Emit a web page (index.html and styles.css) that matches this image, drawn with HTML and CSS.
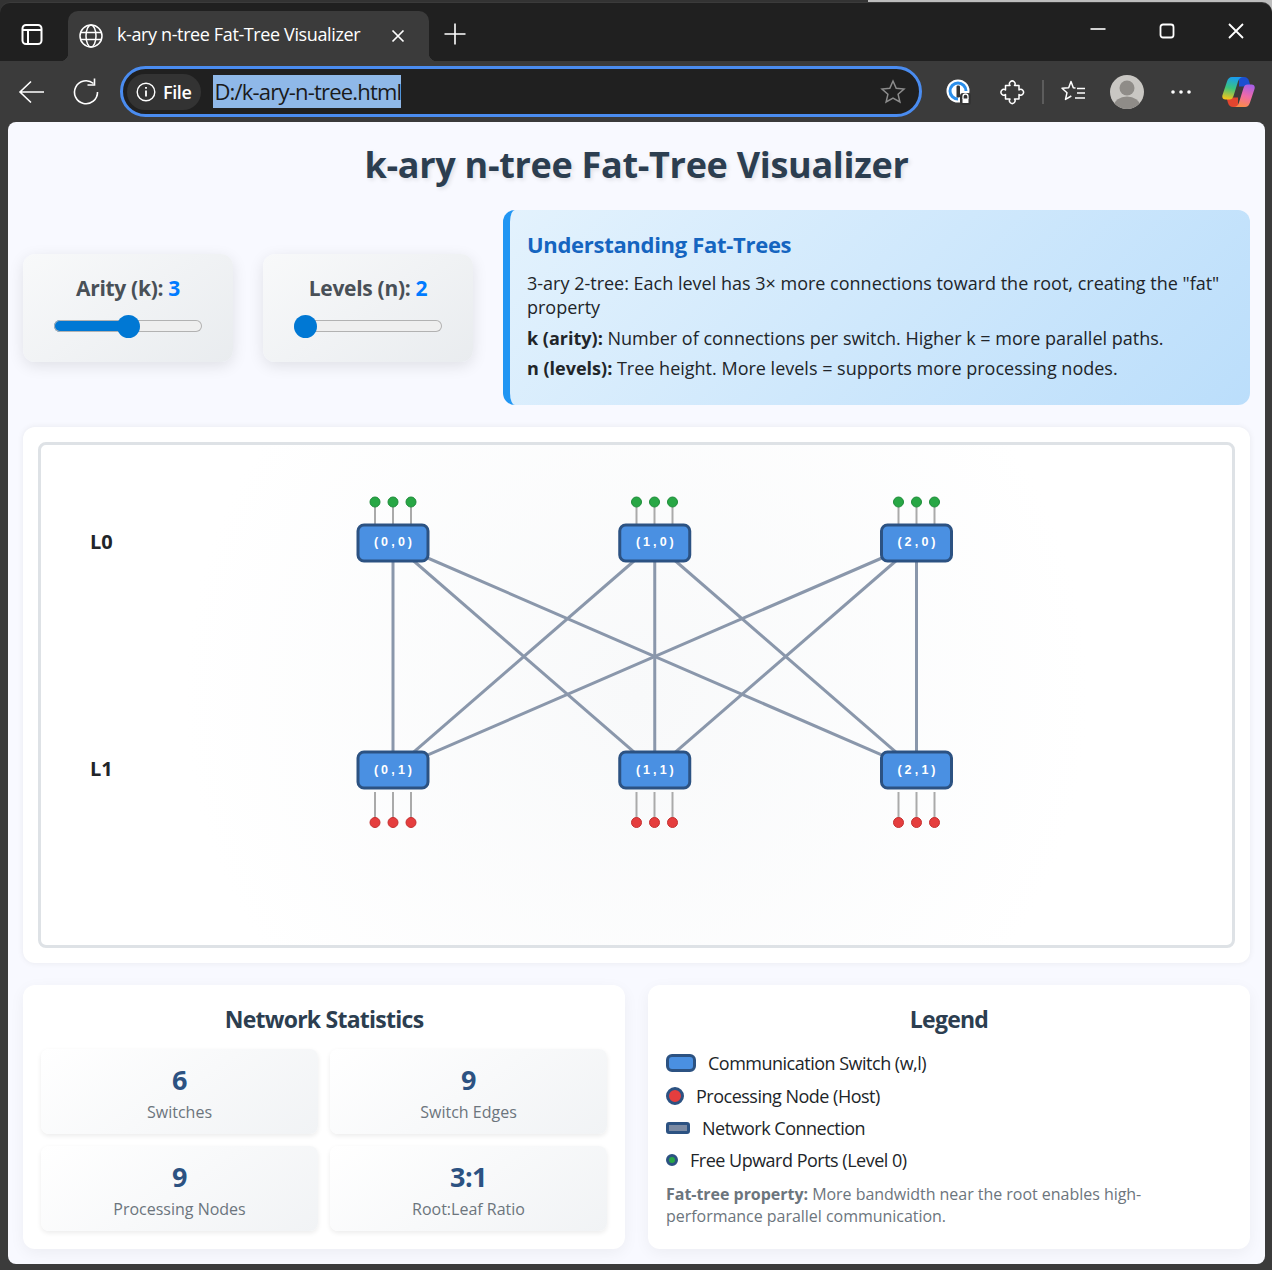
FILE: index.html
```html
<!DOCTYPE html>
<html lang="en">
	<head>
		<meta charset="UTF-8" />
		<meta name="viewport" content="width=device-width, initial-scale=1.0" />
		<title>k-ary n-tree Fat-Tree Visualizer</title>
		<link rel="stylesheet" href="styles.css">
	</head>
	<body>
		<div class="window">
			<div class="tabstrip">
				<svg class="tab-actions" width="24" height="24" viewBox="0 0 24 24" fill="none" stroke="#fff" stroke-width="2"><rect x="2.500" y="3" width="19" height="19" rx="3.500"/><path d="M2.500 8h19M8 8v14"/></svg>
				<div class="tab">
					<svg width="26" height="26" viewBox="0 0 26 26" fill="none" stroke="#fff" stroke-width="1.500"><circle cx="13" cy="13" r="11"/><ellipse cx="13" cy="13" rx="5" ry="11"/><path d="M2.600 9.500h20.800M2.600 16.500h20.800"/></svg>
					<span class="tab-title">k-ary n-tree Fat-Tree Visualizer</span>
					<svg class="tab-close" width="14" height="14" viewBox="0 0 14 14" stroke="#fff" stroke-width="1.700"><path d="M1.500 1.500l11 11M12.500 1.500l-11 11"/></svg>
				</div>
				<svg class="new-tab" width="24" height="24" viewBox="0 0 24 24" stroke="#fff" stroke-width="1.600"><path d="M12 1.500v21M1.500 12h21"/></svg>
				<div class="caption">
					<svg width="16" height="16" viewBox="0 0 16 16" stroke="#fff" stroke-width="1.600"><path d="M0.500 6h15"/></svg>
					<svg width="16" height="16" viewBox="0 0 16 16" fill="none" stroke="#fff" stroke-width="1.800"><rect x="1.500" y="1.500" width="13" height="13" rx="2.500"/></svg>
					<svg width="16" height="16" viewBox="0 0 16 16" stroke="#fff" stroke-width="1.800"><path d="M1 1l14 14M15 1L1 15"/></svg>
				</div>
			</div>
			<div class="toolbar">
				<svg class="nav-back" width="28" height="28" viewBox="0 0 28 28" fill="none" stroke="#fff" stroke-width="1.600"><path d="M2 14h24M13 3.500L2 14l11 10.500"/></svg>
				<svg class="nav-reload" width="28" height="28" viewBox="0 0 28 28" fill="none" stroke="#fff" stroke-width="1.600"><path d="M21.500 5.500A11.500 11.500 0 1 0 25.500 14"/><path d="M22.500 0.500v6.500h-7"/></svg>
				<div class="address">
					<div class="site-info">
						<svg width="20" height="20" viewBox="0 0 20 20" fill="none" stroke="#fff" stroke-width="1.400"><circle cx="10" cy="10" r="8.800"/><path d="M10 8.500v6" stroke-width="1.800"/><path d="M10 5v1.800" stroke-width="1.800"/></svg>
						<span>File</span>
					</div>
					<span class="url">D:/k-ary-n-tree.html</span>
					<svg class="fav-star" width="26" height="26" viewBox="0 0 26 26" fill="none" stroke="#8c8c8c" stroke-width="1.500"><path d="M13 2l3.200 7.300 7.800.8-5.900 5.200 1.800 7.700L13 19l-6.900 4 1.800-7.700L2 10.100l7.800-.8z"/></svg>
				</div>
				<div class="toolbar-icons">
					<svg class="ext-pass" width="26" height="26" viewBox="0 0 26 26"><circle cx="12" cy="12" r="11.500" fill="#fff"/><path d="M12 2.500a9.500 9.500 0 0 1 9.500 9.500h-3a6.500 6.500 0 0 0-13 0 6.500 6.500 0 0 0 6.500 6.500v3A9.500 9.500 0 0 1 12 2.500z" fill="#2b8eea"/><rect x="10.500" y="6.500" width="3.500" height="12" rx="1.200" fill="#333"/><rect x="14" y="14" width="11" height="12" rx="3" fill="#333"/><path d="M17 20v-2.500a2.500 2.500 0 0 1 5 0V20" fill="none" stroke="#fff" stroke-width="1.300"/><rect x="16.500" y="19.500" width="6" height="4.500" fill="#fff"/></svg>
					<svg class="ext-puzzle" width="26" height="26" viewBox="0 0 26 26" fill="none" stroke="#fff" stroke-width="1.500" stroke-linejoin="round"><path d="M6.500 6.500H11a2.800 2.800 0 1 1 4.500 0H20V11a2.800 2.800 0 1 1 0 4.500V20h-4.500a2.800 2.800 0 1 1-4.500 0H6.500v-4.500a2.800 2.800 0 1 1 0-4.500z"/></svg>
					<span class="toolbar-sep"></span>
					<svg class="fav-list" width="26" height="26" viewBox="0 0 26 26" fill="none" stroke="#fff" stroke-width="1.500" stroke-linejoin="round"><path d="M15.500 9l-2.200-.3L11 2.500 8.700 8.700 2 9.300l5 4.400-1.500 6.700 5.800-3.400M17 9.500h8M17 14h8M15 19h10"/></svg>
					<svg class="avatar" width="34" height="34" viewBox="0 0 34 34"><defs><clipPath id="avatarClip"><circle cx="17" cy="17" r="17"/></clipPath></defs><circle cx="17" cy="17" r="17" fill="#c9c7c3"/><g clip-path="url(#avatarClip)" fill="#8f8c88"><circle cx="17" cy="13" r="7.500"/><ellipse cx="17" cy="31" rx="13" ry="9.500"/></g></svg>
					<svg class="more" width="22" height="6" viewBox="0 0 22 6" fill="#fff"><circle cx="3" cy="3" r="1.800"/><circle cx="11" cy="3" r="1.800"/><circle cx="19" cy="3" r="1.800"/></svg>
					<svg class="copilot" width="33" height="30" viewBox="0 0 33 30">
						<defs>
							<linearGradient id="copA" x1="0.500" y1="0" x2="0.300" y2="1"><stop offset="0" stop-color="#1a9cf0"/><stop offset=".5" stop-color="#3cc47c"/><stop offset="1" stop-color="#f6c51a"/></linearGradient>
							<linearGradient id="copB" x1="0.700" y1="0" x2="0.400" y2="1"><stop offset="0" stop-color="#a85fe6"/><stop offset=".5" stop-color="#f06aa8"/><stop offset="1" stop-color="#fb8c48"/></linearGradient>
						</defs>
						<path d="M17 0h5c2.500 0 4.200 1.400 5 4l1.600 5.500H17z" fill="#1c4fd0"/>
						<path d="M16 30h-5c-2.500 0-4.200-1.400-5-4L4.400 20.500H16z" fill="#e2452f"/>
						<path d="M10 0h11.500c-3 0-4.500 1.500-5.500 4.500L11.500 19c-.8 2.500-2 3.500-4 3.500H3.500c-2.500 0-3.800-1.800-3-4.500L5 4.500C6 1.500 7.500 0 10 0z" fill="url(#copA)"/>
						<path d="M23 30H11.500c3 0 4.500-1.500 5.500-4.500L21.500 11c.8-2.500 2-3.500 4-3.500h4c2.500 0 3.800 1.800 3 4.500L28 25.500C27 28.500 25.500 30 23 30z" fill="url(#copB)"/>
					</svg>
				</div>
			</div>
			<div class="page">
				<h1>k-ary n-tree Fat-Tree Visualizer</h1>
				<div class="top-row">
					<div class="control">
						<label for="arity">Arity (k): <span class="value">3</span></label>
						<input type="range" id="arity" min="2" max="4" value="3" style="--fill: 50%" />
					</div>
					<div class="control">
						<label for="levels">Levels (n): <span class="value">2</span></label>
						<input type="range" id="levels" min="2" max="4" value="2" style="--fill: 0%" />
					</div>
					<div class="info">
						<h3>Understanding Fat-Trees</h3>
						<p>3-ary 2-tree: Each level has 3× more connections toward the root, creating the "fat" property</p>
						<p><strong>k (arity):</strong> Number of connections per switch. Higher k = more parallel paths.</p>
						<p><strong>n (levels):</strong> Tree height. More levels = supports more processing nodes.</p>
					</div>
				</div>

				<div class="viz">
					<div class="viz-inner">
						<svg class="tree" viewBox="41 445 1191 500">
							<g class="edges">
								<line x1="393" y1="543" x2="393" y2="770"/>
								<line x1="393" y1="543" x2="654.750" y2="770"/>
								<line x1="393" y1="543" x2="916.500" y2="770"/>
								<line x1="654.750" y1="543" x2="393" y2="770"/>
								<line x1="654.750" y1="543" x2="654.750" y2="770"/>
								<line x1="654.750" y1="543" x2="916.500" y2="770"/>
								<line x1="916.500" y1="543" x2="393" y2="770"/>
								<line x1="916.500" y1="543" x2="654.750" y2="770"/>
								<line x1="916.500" y1="543" x2="916.500" y2="770"/>
							</g>
							<g class="ports">
								<line x1="375" y1="507" x2="375" y2="525"/><line x1="393" y1="507" x2="393" y2="525"/><line x1="411" y1="507" x2="411" y2="525"/>
								<line x1="636.500" y1="507" x2="636.500" y2="525"/><line x1="654.500" y1="507" x2="654.500" y2="525"/><line x1="672.500" y1="507" x2="672.500" y2="525"/>
								<line x1="898.500" y1="507" x2="898.500" y2="525"/><line x1="916.500" y1="507" x2="916.500" y2="525"/><line x1="934.500" y1="507" x2="934.500" y2="525"/>
								<line x1="375" y1="792" x2="375" y2="818"/><line x1="393" y1="792" x2="393" y2="818"/><line x1="411" y1="792" x2="411" y2="818"/>
								<line x1="636.500" y1="792" x2="636.500" y2="818"/><line x1="654.500" y1="792" x2="654.500" y2="818"/><line x1="672.500" y1="792" x2="672.500" y2="818"/>
								<line x1="898.500" y1="792" x2="898.500" y2="818"/><line x1="916.500" y1="792" x2="916.500" y2="818"/><line x1="934.500" y1="792" x2="934.500" y2="818"/>
							</g>
							<g class="free-ports">
								<circle cx="375" cy="502" r="5"/><circle cx="393" cy="502" r="5"/><circle cx="411" cy="502" r="5"/>
								<circle cx="636.500" cy="502" r="5"/><circle cx="654.500" cy="502" r="5"/><circle cx="672.500" cy="502" r="5"/>
								<circle cx="898.500" cy="502" r="5"/><circle cx="916.500" cy="502" r="5"/><circle cx="934.500" cy="502" r="5"/>
							</g>
							<g class="hosts">
								<circle cx="375" cy="822.500" r="5"/><circle cx="393" cy="822.500" r="5"/><circle cx="411" cy="822.500" r="5"/>
								<circle cx="636.500" cy="822.500" r="5"/><circle cx="654.500" cy="822.500" r="5"/><circle cx="672.500" cy="822.500" r="5"/>
								<circle cx="898.500" cy="822.500" r="5"/><circle cx="916.500" cy="822.500" r="5"/><circle cx="934.500" cy="822.500" r="5"/>
							</g>
							<g class="switches">
								<rect x="358" y="525" width="70" height="36" rx="6"/>
								<rect x="619.750" y="525" width="70" height="36" rx="6"/>
								<rect x="881.500" y="525" width="70" height="36" rx="6"/>
								<rect x="358" y="752" width="70" height="36" rx="6"/>
								<rect x="619.750" y="752" width="70" height="36" rx="6"/>
								<rect x="881.500" y="752" width="70" height="36" rx="6"/>
							</g>
							<!-- one x per glyph keeps the fixed pitch of the labels -->
							<g class="switch-labels">
								<text x="376.200 384.600 393 401.400 409.800" y="546">(0,0)</text>
								<text x="638 646.400 654.800 663.200 671.600" y="546">(1,0)</text>
								<text x="899.700 908.100 916.500 924.900 933.300" y="546">(2,0)</text>
								<text x="376.200 384.600 393 401.400 409.800" y="774">(0,1)</text>
								<text x="638 646.400 654.800 663.200 671.600" y="774">(1,1)</text>
								<text x="899.700 908.100 916.500 924.900 933.300" y="774">(2,1)</text>
							</g>
							<g class="level-labels">
								<text x="90" y="549">L0</text>
								<text x="90" y="776">L1</text>
							</g>
						</svg>
					</div>
				</div>

				<div class="bottom-row">
					<div class="panel">
						<h3 class="stats-title">Network Statistics</h3>
						<div class="stats">
							<div class="stat"><div class="stat-value">6</div><div class="stat-label">Switches</div></div>
							<div class="stat"><div class="stat-value">9</div><div class="stat-label">Switch Edges</div></div>
							<div class="stat"><div class="stat-value">9</div><div class="stat-label">Processing Nodes</div></div>
							<div class="stat"><div class="stat-value">3:1</div><div class="stat-label">Root:Leaf Ratio</div></div>
						</div>
					</div>
					<div class="panel">
						<h3 class="legend-title">Legend</h3>
						<div class="legend-item legend-first"><span class="swatch swatch-switch"></span>Communication Switch (w,l)</div>
						<div class="legend-item"><span class="swatch swatch-host"></span>Processing Node (Host)</div>
						<div class="legend-item"><span class="swatch swatch-edge"></span>Network Connection</div>
						<div class="legend-item"><span class="swatch swatch-port"></span>Free Upward Ports (Level 0)</div>
						<p class="legend-note"><strong>Fat-tree property:</strong> More bandwidth near the root enables high-performance parallel communication.</p>
					</div>
				</div>
			</div>
		</div>
	</body>
</html>
```

FILE: styles.css
```css
* {
	box-sizing: border-box;
}
html,
body {
	margin: 0;
	height: 100%;
}
body {
	font-family: "Open Sans", "Noto Sans", sans-serif;
	overflow: hidden;
	background: linear-gradient(to right, #333 868px, #bdbdbd 868px);
}
.window {
	height: 1268px;
	margin-top: 2px;
	padding-top: 1px;
	background: #3b3b3b;
	border-radius: 10px 10px 0 0;
	display: flex;
	flex-direction: column;
}

/* browser chrome */
.tabstrip {
	height: 58px;
	background: #202020;
	border-radius: 10px 10px 0 0;
	display: flex;
	align-items: center;
	padding: 8px 0 0 20px;
}
.tab-actions {
	margin: -4px 0 0 0;
}
.tab {
	position: relative;
	width: 361px;
	height: 50px;
	margin-left: 24px;
	padding: 0 24px 0 10px;
	background: #3b3b3b;
	border-radius: 10px 10px 0 0;
	display: flex;
	align-items: center;
	color: #fff;
	font-size: 18px;
}
.tab::before,
.tab::after {
	content: "";
	position: absolute;
	bottom: 0;
	width: 8px;
	height: 8px;
}
.tab::before {
	left: -8px;
	background: radial-gradient(circle at 0 0, transparent 8px, #3b3b3b 8.500px);
}
.tab::after {
	right: -8px;
	background: radial-gradient(circle at 100% 0, transparent 8px, #3b3b3b 8.500px);
}
.tab-title {
	flex: 1;
	margin: -5px 0 0 13px;
	letter-spacing: -0.38px;
	white-space: nowrap;
}
.new-tab {
	margin: -4px 0 0 14px;
}
.caption {
	margin-left: auto;
	margin-top: -10px;
	padding-right: 28px;
	display: flex;
	gap: 53px;
}
.toolbar {
	height: 61px;
	display: flex;
	align-items: center;
	padding: 0 0 0 18px;
}
.nav-reload {
	margin-left: 26px;
}
.address {
	width: 802px;
	height: 51px;
	margin-left: 20px;
	border: 3px solid #4a8cf0;
	border-radius: 26px;
	background: #202020;
	display: flex;
	align-items: center;
	padding-left: 4px;
	color: #fff;
}
.site-info {
	height: 36px;
	padding: 0 10px 0 9px;
	border-radius: 18px;
	background: #333;
	display: flex;
	align-items: center;
	gap: 7px;
	font-size: 18px;
	font-weight: 600;
	letter-spacing: -0.4px;
}
.url {
	margin-left: 12px;
	padding: 0 0 0 1px;
	background: #8fb8e8;
	color: #1a1a1a;
	font-size: 22px;
	line-height: 33px;
	letter-spacing: -0.8px;
}
.fav-star {
	margin-left: auto;
	margin-right: 13px;
}
.toolbar-icons {
	display: flex;
	align-items: center;
	margin-left: 24px;
}
.ext-puzzle {
	margin-left: 27px;
}
.toolbar-sep {
	width: 2px;
	height: 24px;
	margin-left: 17px;
	background: #5c5c5c;
}
.fav-list {
	margin-left: 16px;
}
.avatar {
	margin-left: 24px;
}
.more {
	margin-left: 26px;
}
.copilot {
	margin-left: 30px;
}

/* page */
.page {
	height: 1142px;
	margin: 0 7px 0 8px;
	padding: 15px;
	background: #f8f9ff;
	border-radius: 8px;
}
h1 {
	margin: 0 0 15px;
	height: 58px;
	text-align: center;
	color: #2c3e50;
	font-size: 36px;
	line-height: 56px;
	letter-spacing: -0.3px;
	text-shadow: 2px 2px 4px rgba(0, 0, 0, 0.1);
}
.top-row {
	display: flex;
	align-items: center;
	gap: 30px;
}
.control {
	width: 210px;
	height: 108px;
	padding: 18px 31px 0;
	border-radius: 12px;
	background: linear-gradient(145deg, #f8f9fa, #e9ecef);
	box-shadow: 0 4px 15px rgba(0, 0, 0, 0.1);
	text-align: center;
}
.control label {
	display: block;
	margin-bottom: 11px;
	color: #495057;
	font-size: 21px;
	font-weight: 700;
	letter-spacing: -0.3px;
	line-height: 32px;
}
.value {
	color: #007bff;
}
input[type="range"] {
	-webkit-appearance: none;
	appearance: none;
	display: block;
	width: 148px;
	height: 23px;
	margin: 0;
	background: transparent;
}
input[type="range"]::-webkit-slider-runnable-track {
	height: 12px;
	border-radius: 6px;
	box-shadow: inset 0 0 0 1px #b2b2b2;
	background: linear-gradient(to right, #0078d4 var(--fill), #efefef var(--fill));
}
input[type="range"]::-webkit-slider-thumb {
	-webkit-appearance: none;
	width: 23px;
	height: 23px;
	margin-top: -5.500px;
	border-radius: 50%;
	background: #0078d4;
}
.info {
	flex: 1;
	height: 195px;
	padding: 17px 20px 0 17px;
	border-left: 7px solid #2196f3;
	border-radius: 12px;
	background: linear-gradient(135deg, #e3f2fd, #bbdefb);
	color: #212529;
	font-size: 18px;
}
.info h3 {
	margin: 0 0 10px;
	color: #1565c0;
	font-size: 22px;
	line-height: 34px;
	letter-spacing: -0.3px;
}
.info p {
	margin: 0 0 6.500px;
	line-height: 24px;
}
.viz {
	height: 536px;
	margin-top: 22px;
	padding: 15px;
	border-radius: 12px;
	background: #fff;
	box-shadow: 0 0 6px rgba(0, 0, 0, 0.07);
}
.viz-inner {
	height: 506px;
	border: 3px solid #dee2e6;
	border-radius: 8px;
	background: radial-gradient(circle at center, #f8f9fa 0%, #fff 70%);
}
.tree {
	display: block;
	width: 100%;
	height: 100%;
}
.edges line {
	stroke: #8a97ab;
	stroke-width: 3;
}
.ports line {
	stroke: #aaaaaa;
	stroke-width: 2;
}
.free-ports circle {
	fill: #28a745;
	stroke: #1e8c3a;
}
.hosts circle {
	fill: #e53e3e;
	stroke: #c53030;
}
.switches rect {
	fill: #4a90e2;
	stroke: #2c5282;
	stroke-width: 3;
}
.switch-labels text {
	fill: #fff;
	font-family: "Liberation Sans", sans-serif;
	font-size: 12.500px;
	font-weight: 700;
	text-anchor: middle;
}
.level-labels text {
	fill: #212529;
	font-size: 20px;
	font-weight: 700;
}
.bottom-row {
	display: grid;
	grid-template-columns: 1fr 1fr;
	gap: 23px;
	margin-top: 22px;
}
.panel {
	height: 264px;
	padding: 18px;
	border-radius: 12px;
	background: #fff;
	box-shadow: 0 4px 15px rgba(0, 0, 0, 0.05);
}
.panel h3 {
	text-align: center;
	color: #2c3e50;
	font-size: 23px;
	line-height: 32px;
	letter-spacing: -0.75px;
}
.stats-title {
	margin: 0 0 14px;
}
.legend-title {
	margin: 0 0 10px;
}
.stats {
	display: grid;
	grid-template-columns: 1fr 1fr;
	gap: 12px;
}
.stat {
	height: 85px;
	padding-top: 12px;
	border-radius: 8px;
	background: linear-gradient(145deg, #fff, #f1f3f5);
	box-shadow: 0 2px 5px rgba(0, 0, 0, 0.08);
	text-align: center;
}
.stat-value {
	color: #2c5282;
	font-size: 27px;
	font-weight: 700;
	line-height: 38px;
	letter-spacing: -0.5px;
}
.stat-label {
	margin-top: 1px;
	color: #6c757d;
	font-size: 16px;
	line-height: 24px;
}
.legend-item {
	display: flex;
	align-items: center;
	height: 32px;
	color: #212529;
	font-size: 18px;
	letter-spacing: -0.5px;
}
.legend-first {
	height: 35px;
}
.swatch {
	display: block;
	margin-right: 12px;
	border: 3px solid #2c5282;
}
.swatch-switch {
	width: 30px;
	height: 18px;
	border-radius: 6px;
	background: #4a90e2;
}
.swatch-host {
	width: 18px;
	height: 18px;
	border-radius: 50%;
	background: #e53e3e;
}
.swatch-edge {
	width: 24px;
	height: 12px;
	border-radius: 3px;
	background: #7b8aa3;
	margin-right: 12px;
}
.swatch-port {
	width: 12px;
	height: 12px;
	border-radius: 50%;
	background: #28a745;
}
.legend-note {
	margin: 7px 0 0;
	color: #6c757d;
	font-size: 16px;
	line-height: 22px;
	letter-spacing: -0.03px;
}
```
